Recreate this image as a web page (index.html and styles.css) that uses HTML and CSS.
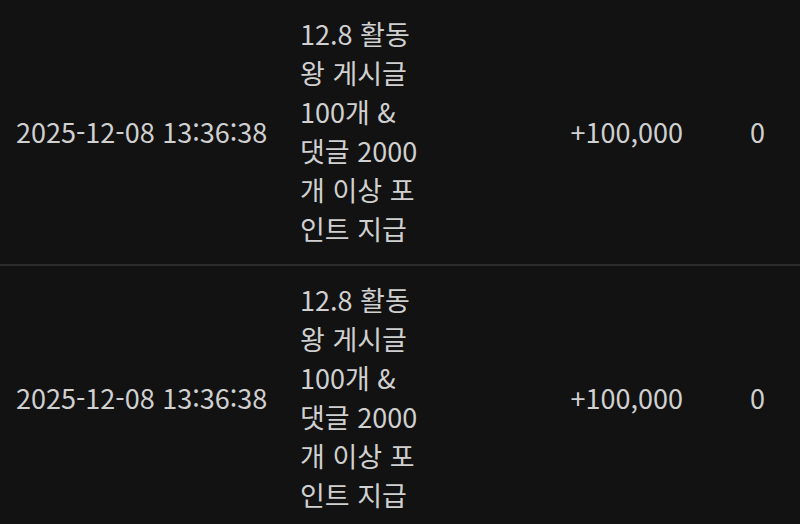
FILE: index.html
```html
<!DOCTYPE html>
<html lang="ko">
<head>
<meta charset="utf-8">
<link rel="stylesheet" href="styles.css">
</head>
<body>
<div class="list">
  <div class="row">
    <div class="cell date">2025-12-08 13:36:38</div>
    <div class="cell desc">12.8 활동왕 게시글 100개 &amp; 댓글 2000개 이상 포인트 지급</div>
    <div class="cell amount">+100,000</div>
    <div class="cell rest">0</div>
  </div>
  <div class="row">
    <div class="cell date">2025-12-08 13:36:38</div>
    <div class="cell desc">12.8 활동왕 게시글 100개 &amp; 댓글 2000개 이상 포인트 지급</div>
    <div class="cell amount">+100,000</div>
    <div class="cell rest">0</div>
  </div>
</div>
</body>
</html>
```
FILE: styles.css
```css
html, body {
  margin: 0;
  padding: 0;
  background: #121212;
}
body {
  font-family: "Noto Sans CJK KR", "Noto Sans", sans-serif;
  font-size: 27px;
  line-height: 39px;
  color: #d0d0d0;
  overflow: hidden;
}
.list {
  display: flex;
  flex-direction: column;
}
.row {
  display: grid;
  grid-template-columns: 284px 156px 259px 1fr;
  align-items: center;
  padding: 14px 0 16px;
  border-bottom: 2px solid #2c2c2c;
}
.cell {
  padding: 0 16px;
}
.amount {
  text-align: right;
}
.rest {
  padding-left: 51px;
}
```
